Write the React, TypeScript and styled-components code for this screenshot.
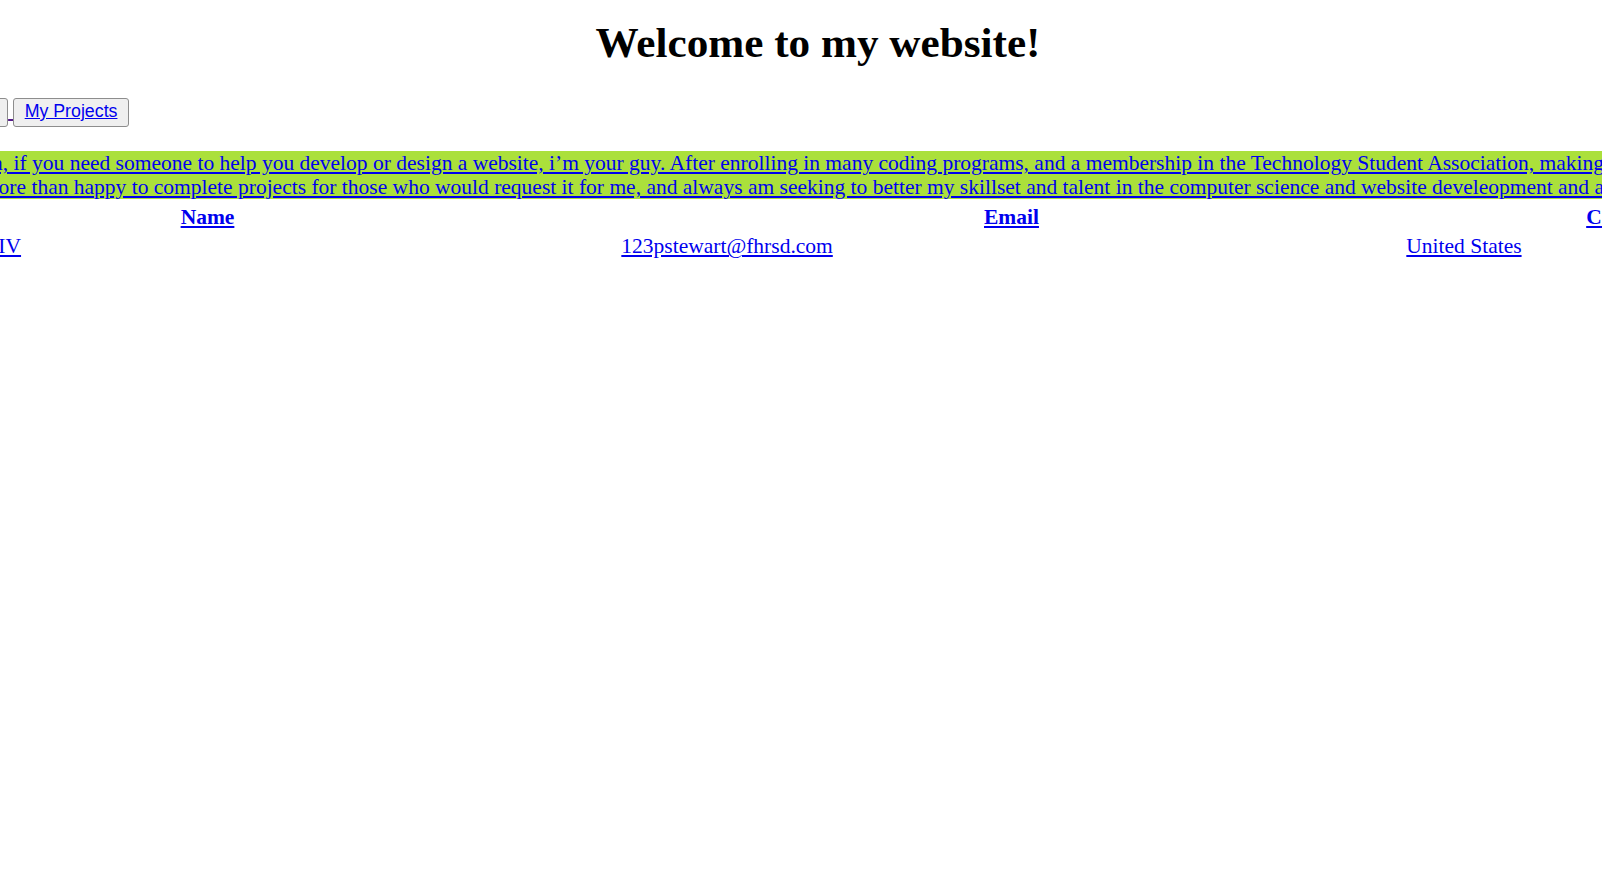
import React from "react";
import styled, { createGlobalStyle } from "styled-components";

const GlobalStyle = createGlobalStyle`
  html, body {
    margin: 0;
    padding: 0;
    background: #ffffff;
  }
  body {
    font-family: "Liberation Serif", "Times New Roman", serif;
    overflow: hidden;
  }
`;

const LINK = "#0000ee";
const VISITED = "#551a8b";
const LIME = "#abe03b";

const Marquee = styled.div`
  width: 100%;
  overflow: hidden;
`;

const Track = styled.div<{ $shift: number; $width: number }>`
  width: ${(p) => p.$width}px;
  transform: translateX(${(p) => p.$shift}px);
`;

const Title = styled.h1`
  margin: 17.5px 0 0;
  padding-right: 6px;
  font-size: 43.2px;
  font-weight: bold;
  line-height: normal;
  text-align: center;
  color: #000000;
`;

const ButtonRow = styled.div`
  display: flex;
  align-items: baseline;
  margin-top: 31px;
  font-size: 21.5px;
`;

const NavButton = styled.button`
  box-sizing: border-box;
  height: 28.5px;
  margin: 0;
  padding: 1px 10.2px 4.5px;
  border: 1.5px solid #8d8d8d;
  border-radius: 3px;
  background: #efefef;
  font-family: "Liberation Sans", Arial, sans-serif;
  font-size: 17.78px;
  line-height: 20px;
  white-space: nowrap;
  cursor: pointer;
`;

const ButtonLink = styled.a`
  color: ${LINK};
  text-decoration: underline;
`;

const VisitedGap = styled.a`
  color: ${VISITED};
  text-decoration: underline;
  white-space: pre;
  font-size: 21.5px;
`;

const Blurb = styled.a`
  display: block;
  margin-top: 24.5px;
  background: ${LIME};
  color: ${LINK};
  text-decoration: underline;
  font-size: 21.5px;
  line-height: 24px;
  white-space: nowrap;
`;

const BlurbLine = styled.span`
  display: block;
`;

const Table = styled.table`
  width: 100%;
  margin-top: 2.5px;
  table-layout: fixed;
  border-collapse: separate;
  border-spacing: 2.67px;
  font-size: 21.5px;
  line-height: normal;
`;

const Col = styled.col<{ $w?: number }>`
  ${(p) => (p.$w ? `width: ${p.$w}px;` : "")}
`;

const HeadCell = styled.th`
  padding: 1.33px;
  text-align: center;
  font-weight: bold;
  white-space: nowrap;
  overflow: visible;
`;

const Cell = styled.td`
  padding: 1.33px;
  text-align: left;
  white-space: nowrap;
  overflow: visible;
`;

const CellLink = styled.a`
  color: ${LINK};
  text-decoration: underline;
`;

const navItems = ["Homepage", "About Me", "My Projects"];

const headers = ["Name", "Email", "Country"];
const row = ["Pieter Andrew Stewart IV", "123pstewart@fhrsd.com", "United States"];

export default function App() {
  return (
    <>
      <GlobalStyle />
      <Marquee>
        <Track $shift={-205} $width={2052}>
          <Title>Welcome to my website!</Title>

          <ButtonRow>
            {navItems.map((label, i) => (
              <React.Fragment key={label}>
                {i > 0 && <VisitedGap href="#"> </VisitedGap>}
                <NavButton type="button">
                  <ButtonLink href="#">{label}</ButtonLink>
                </NavButton>
              </React.Fragment>
            ))}
          </ButtonRow>

          <Blurb href="#">
            <BlurbLine>
              Whatever your situation, if you need someone to help you develop or design a website, i’m your guy.
              After enrolling in many coding programs, and a membership in the Technology Student Association,
              making websites has become quite
            </BlurbLine>
            <BlurbLine>
              feasible. I am always more than happy to complete projects for those who would request it for me,
              and always am seeking to better my skillset and talent in the computer science and website
              develeopment and art of coding.
            </BlurbLine>
          </Blurb>

          <Table>
            <colgroup>
              <Col $w={821} />
              <Col $w={783} />
              <Col />
            </colgroup>
            <thead>
              <tr>
                {headers.map((h) => (
                  <HeadCell key={h}>
                    <CellLink href="#">{h}</CellLink>
                  </HeadCell>
                ))}
              </tr>
            </thead>
            <tbody>
              <tr>
                {row.map((v) => (
                  <Cell key={v}>
                    <CellLink href="#">{v}</CellLink>
                  </Cell>
                ))}
              </tr>
            </tbody>
          </Table>
        </Track>
      </Marquee>
    </>
  );
}
